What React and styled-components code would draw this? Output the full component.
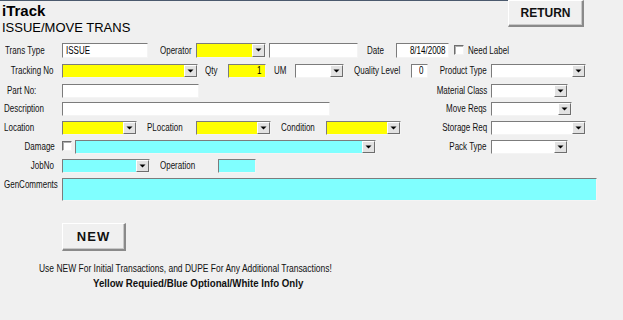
import React from 'react';
import styled, { createGlobalStyle } from 'styled-components';

const GlobalStyle = createGlobalStyle`
  html, body {
    margin: 0;
    padding: 0;
    background: #f0f0f0;
  }
  body {
    width: 623px;
    height: 320px;
    overflow: hidden;
    font-family: "Liberation Sans", Arial, sans-serif;
    color: #000;
  }
`;

// the old form font is a narrow one; squeeze Arial-metric text to match
const Narrow = styled.span`
  display: inline-block;
  flex: none;
  transform: scaleX(${(p) => p.$sx || 0.8});
  transform-origin: ${(p) => p.$origin || 'left'} center;
`;

const Screen = styled.div`
  width: 623px;
  height: 320px;
  display: flex;
  flex-direction: column;
`;

const TopEdge = styled.div`
  width: 557px;
  height: 1px;
  background: #4b5a6e;
`;

const Header = styled.div`
  height: 42px;
  display: flex;
  align-items: flex-start;
`;

const TitleBlock = styled.div`
  padding: 2px 0 0 2px;
  display: flex;
  flex-direction: column;
`;

const AppName = styled.div`
  font-size: 15px;
  font-weight: bold;
  line-height: 16px;
`;

const Subtitle = styled.div`
  font-size: 13px;
  line-height: 15px;
  margin-top: 1px;
`;

const RaisedButton = styled.button`
  box-sizing: border-box;
  flex: none;
  width: ${(p) => p.$w}px;
  height: ${(p) => p.$h}px;
  margin: ${(p) => p.$margin || 0};
  padding: 0;
  background: #f0f0f0;
  border-style: solid;
  border-width: 1px 2px 2px 1px;
  border-color: #ffffff #8a8a8a #8a8a8a #ffffff;
  box-shadow: inset -1px -1px 0 #c8c8c8;
  font-family: "Liberation Sans", Arial, sans-serif;
  font-weight: bold;
  font-size: ${(p) => p.$fs}px;
  letter-spacing: ${(p) => p.$ls || 0}px;
  color: #111;
`;

const Form = styled.div`
  display: flex;
  flex-direction: column;
  font-size: 10px;
`;

const Row = styled.div`
  display: flex;
  align-items: flex-start;
  height: ${(p) => p.$h}px;
  margin-top: ${(p) => p.$mt || 0}px;
`;

const LeftPart = styled.div`
  display: flex;
  align-items: flex-start;
  width: 430px;
  height: 100%;
`;

const RightPart = styled.div`
  display: flex;
  align-items: flex-start;
  height: 100%;
`;

const LabelBox = styled.span`
  box-sizing: border-box;
  flex: none;
  display: flex;
  justify-content: ${(p) => (p.$align === 'right' ? 'flex-end' : 'flex-start')};
  width: ${(p) => p.$w}px;
  margin-left: ${(p) => p.$ml || 0}px;
  padding-left: ${(p) => p.$pl || 0}px;
  padding-right: ${(p) => p.$pr || 0}px;
  line-height: ${(p) => p.$lh || 14}px;
  white-space: nowrap;
  color: #111;
`;

const colours = {
  white: '#ffffff',
  yellow: '#ffff00',
  cyan: '#80ffff',
};

const Field = styled.div`
  box-sizing: border-box;
  flex: none;
  position: relative;
  display: flex;
  justify-content: ${(p) => (p.$align === 'right' ? 'flex-end' : 'flex-start')};
  width: ${(p) => p.$w}px;
  height: ${(p) => p.$h || 14}px;
  margin-left: ${(p) => p.$ml || 0}px;
  background: ${(p) => colours[p.$bg || 'white']};
  border-style: solid;
  border-width: 1px;
  border-color: #7c7c7c #f4f4f4 #f4f4f4 #7c7c7c;
  padding: 0 3px;
  line-height: ${(p) => (p.$h || 14) - 2}px;
  white-space: nowrap;
  overflow: hidden;
`;

const ArrowButton = styled.span`
  position: absolute;
  top: 0;
  right: 0;
  bottom: 0;
  width: 13px;
  box-sizing: border-box;
  background: #e2e2e2;
  border-style: solid;
  border-width: 1px;
  border-color: #ffffff #6e6e6e #6e6e6e #ffffff;
  display: flex;
  align-items: center;
  justify-content: center;
`;

const Check = styled.span`
  box-sizing: border-box;
  flex: none;
  width: 10px;
  height: 10px;
  margin-left: ${(p) => p.$ml || 0}px;
  margin-top: ${(p) => p.$mt || 0}px;
  background: #ffffff;
  border-style: solid;
  border-width: 1px;
  border-color: #6e6e6e #f4f4f4 #f4f4f4 #6e6e6e;
  box-shadow: inset 1px 1px 0 #b0b0b0;
`;

const Bottom = styled.div`
  display: flex;
  flex-direction: column;
`;

const Hint = styled.div`
  font-size: ${(p) => (p.$bold ? 11 : 11)}px;
  line-height: 12px;
  margin-top: ${(p) => p.$mt || 0}px;
  padding-left: ${(p) => p.$pl}px;
  font-weight: ${(p) => (p.$bold ? 'bold' : 'normal')};
  color: #111;
  white-space: nowrap;
`;

function Label({ children, align, ...rest }) {
  return (
    <LabelBox $align={align} {...rest}>
      <Narrow $origin={align === 'right' ? 'right' : 'left'}>{children}</Narrow>
    </LabelBox>
  );
}

function Text({ children, w, h, bg, ml, align }) {
  return (
    <Field $w={w} $h={h} $bg={bg} $ml={ml} $align={align}>
      <Narrow $origin={align === 'right' ? 'right' : 'left'}>{children}</Narrow>
    </Field>
  );
}

function Combo({ w, h, bg, ml }) {
  return (
    <Field $w={w} $h={h} $bg={bg} $ml={ml}>
      <ArrowButton>
        <svg width="7" height="5" viewBox="0 0 7 5">
          <path d="M0.5 0.5 H6.5 L3.5 3.5 Z" fill="#000" />
        </svg>
      </ArrowButton>
    </Field>
  );
}

function RightField({ label, w }) {
  return (
    <RightPart>
      <Label $w={61} $pr={4} align="right">{label}</Label>
      <Combo w={w} />
    </RightPart>
  );
}

export default function App() {
  return (
    <Screen>
      <GlobalStyle />
      <TopEdge />
      <Header>
        <TitleBlock>
          <AppName>iTrack</AppName>
          <Subtitle>ISSUE/MOVE TRANS</Subtitle>
        </TitleBlock>
        <RaisedButton $w={76} $h={27} $fs={12} $margin="-1px 39px 0 auto">RETURN</RaisedButton>
      </Header>

      <Form>
        <Row $h={15}>
          <Label $w={62} $pl={5} $lh={15}>Trans Type</Label>
          <Text w={86} h={15}>ISSUE</Text>
          <Label $w={36} $ml={12} $lh={15}>Operator</Label>
          <Combo w={70} h={15} bg="yellow" />
          <Field $w={89} $h={15} $ml={3} />
          <Label $w={29} $ml={9} $lh={15}>Date</Label>
          <Text w={53} h={15} align="right">8/14/2008</Text>
          <Check $ml={5} $mt={2} />
          <Label $w={60} $ml={4} $lh={15}>Need Label</Label>
        </Row>

        <Row $h={14} $mt={6}>
          <LeftPart>
            <Label $w={62} $pr={8} align="right">Tracking No</Label>
            <Combo w={136} bg="yellow" />
            <Label $w={23} $ml={7}>Qty</Label>
            <Text w={38} bg="yellow" align="right">1</Text>
            <Label $w={21} $ml={8}>UM</Label>
            <Combo w={49} />
            <Label $w={57} $ml={10}>Quality Level</Label>
            <Text w={17} align="right">0</Text>
          </LeftPart>
          <RightField label="Product Type" w={95} />
        </Row>

        <Row $h={14} $mt={6}>
          <LeftPart>
            <Label $w={62} $pl={7}>Part No:</Label>
            <Field $w={137} />
          </LeftPart>
          <RightField label="Material Class" w={77} />
        </Row>

        <Row $h={14} $mt={4}>
          <LeftPart>
            <Label $w={62} $pl={4}>Description</Label>
            <Field $w={268} />
          </LeftPart>
          <RightField label="Move Reqs" w={81} />
        </Row>

        <Row $h={14} $mt={5}>
          <LeftPart>
            <Label $w={62} $pl={4}>Location</Label>
            <Combo w={75} bg="yellow" />
            <Label $w={49} $ml={10}>PLocation</Label>
            <Combo w={75} bg="yellow" />
            <Label $w={45} $ml={10}>Condition</Label>
            <Combo w={75} bg="yellow" />
          </LeftPart>
          <RightField label="Storage Req" w={95} />
        </Row>

        <Row $h={14} $mt={5}>
          <LeftPart>
            <Label $w={62} $pr={7} align="right">Damage</Label>
            <Check $mt={1} />
            <Combo w={301} bg="cyan" ml={3} />
          </LeftPart>
          <RightField label="Pack Type" w={77} />
        </Row>

        <Row $h={14} $mt={5}>
          <Label $w={62} $pr={8} align="right">JobNo</Label>
          <Combo w={88} bg="cyan" />
          <Label $w={58} $ml={10}>Operation</Label>
          <Field $w={38} $bg="cyan" />
        </Row>

        <Row $h={23} $mt={5}>
          <Label $w={62} $pl={4}>GenComments</Label>
          <Field $w={535} $h={23} $bg="cyan" />
        </Row>
      </Form>

      <Bottom>
        <RaisedButton $w={64} $h={28} $fs={13} $ls={1} $margin="22px 0 0 62px">NEW</RaisedButton>
        <Hint $pl={39} $mt={11}>
          <Narrow $sx={0.77}>Use NEW For Initial Transactions, and DUPE For Any Additional Transactions!</Narrow>
        </Hint>
        <Hint $pl={93} $mt={3} $bold>
          <Narrow $sx={0.88}>Yellow Requied/Blue Optional/White Info Only</Narrow>
        </Hint>
      </Bottom>
    </Screen>
  );
}
